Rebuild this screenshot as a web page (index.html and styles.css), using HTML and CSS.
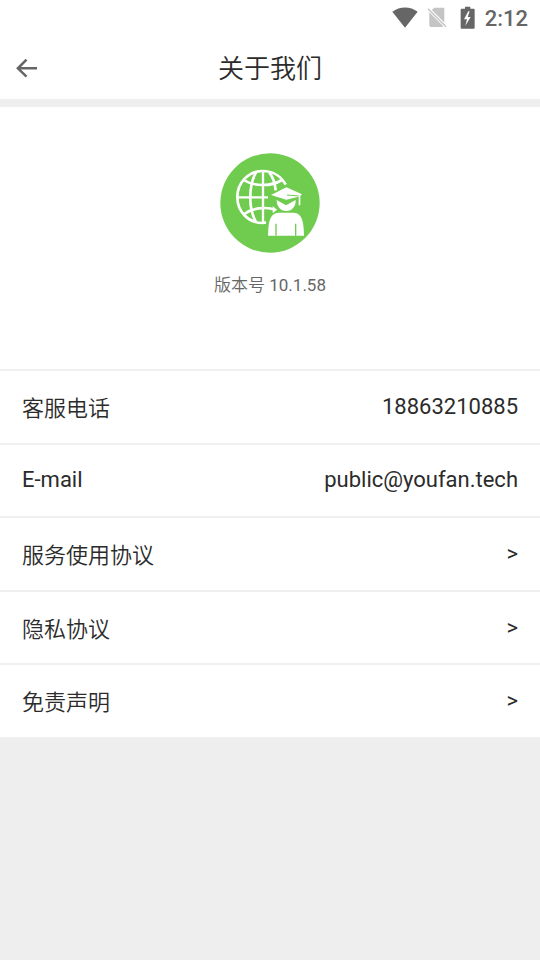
FILE: index.html
```
<!DOCTYPE html>
<html lang="zh-CN">
<head>
<meta charset="utf-8">
<meta name="viewport" content="width=device-width, initial-scale=1">
<title>关于我们</title>
<link rel="stylesheet" href="styles.css">
</head>
<body>
<div class="status">
  <svg class="wifi" viewBox="37 20 78 63" aria-hidden="true"><path d="M38 34C60 17 92 17 114 34L76 82Z"/></svg>
  <svg class="sim" viewBox="142 20 60 66" aria-hidden="true"><path d="M164 25H190Q194 25 194 29V70L156 32Z"/><path d="M149 38L191 80Q189 83 185 83H154Q149 83 149 78Z"/><path d="M145 28L199 82" fill="none" stroke="#fff" stroke-width="9"/><path d="M145 28L199 82" fill="none" stroke="#c4c4c4" stroke-width="4.5"/></svg>
  <svg class="battery" viewBox="241 16 45 69" aria-hidden="true"><path d="M256 18H272V24H282Q285 24 285 27V81Q285 84 282 84H246Q243 84 243 81V27Q243 24 246 24H256Z"/><path d="M266 32L253 56H262L257 75L273 49H264L270 32Z" fill="#fff"/></svg>
  <time>2:12</time>
</div>
<header class="header">
  <button class="back" type="button" aria-label="返回"><svg viewBox="47 54 69 60" aria-hidden="true"><path d="M113 85H54M80 58L53 85L80 111"/></svg></button>
  <h1>关于我们</h1>
</header>
<main>
  <section class="about">
    <svg class="logo" viewBox="30 22 300 300" aria-hidden="true">
      <circle cx="180" cy="172" r="149" fill="#70cc4e"/>
      <g fill="none" stroke="#fff" stroke-width="8">
        <path d="M227 117C213 91 187 76 158 76C115 76 82 111 82 154C82 198 115 232 158 232L168 230"/>
        <path d="M159 76V232M82 155H174" stroke-width="7"/>
        <path d="M138 80C115 120 115 190 138 229M178 80C190 96 195 112 197 134"/>
        <path d="M101 103C132 123 184 123 216 103M103 205C127 187 163 183 191 191"/>
      </g>
      <g fill="#fff">
        <path d="M188 181L201 192L188 203Z"/>
        <path d="M183 148L229 125L276 146L271 151V179H266V153L229 162Z"/>
        <path d="M200 163L228 179L257 163C258 182 246 196 229 196C211 196 200 182 200 163Z"/>
        <path d="M174 270C175 236 177 201 207 201H250C279 201 281 236 282 270Z"/>
      </g>
      <path d="M231 148L266 151" stroke="#70cc4e" stroke-width="3"/>
      <path d="M198 270V234M257 270V234" stroke="#70cc4e" stroke-width="4"/>
    </svg>
    <p class="version"><span class="cjk">版本号</span> 10.1.58</p>
  </section>
  <ul class="list">
    <li><span class="label cjk">客服电话</span><span>18863210885</span></li>
    <li><span>E-mail</span><span>public@youfan.tech</span></li>
    <li><a href="#service"><span class="label cjk">服务使用协议</span><span>&gt;</span></a></li>
    <li><a href="#privacy"><span class="label cjk">隐私协议</span><span>&gt;</span></a></li>
    <li><a href="#disclaimer"><span class="label cjk">免责声明</span><span>&gt;</span></a></li>
  </ul>
</main>
</body>
</html>
```
FILE: styles.css
```
* {
  box-sizing: border-box;
}

body {
  margin: 0;
  background: #eee;
  color: #2b2b2b;
  font-family: Roboto, "Noto Sans CJK SC", sans-serif;
}

.cjk {
  font-weight: 350;
}

.status {
  display: flex;
  align-items: center;
  justify-content: flex-end;
  height: 36px;
  padding: 0 12px;
  background: #fff;
  color: #666;
  fill: #666;
}

.wifi {
  width: 26px;
  height: 21px;
}

.sim {
  width: 20px;
  height: 22px;
  margin: 0 13px 0 9px;
  fill: #c4c4c4;
}

.battery {
  width: 15px;
  height: 23px;
  margin-right: 10px;
}

.status svg {
  margin-bottom: 2px;
}

.status time {
  padding-top: 2px;
  font-size: 22px;
  font-weight: 500;
  line-height: 34px;
}

.header {
  display: grid;
  grid-template-columns: 54px 1fr 54px;
  align-items: center;
  height: 63px;
  background: #fff;
}

.back {
  display: flex;
  padding: 0 16px;
  border: 0;
  background: none;
}

.back svg {
  width: 23px;
  height: 20px;
  fill: none;
  stroke: #666;
  stroke-width: 8;
}

h1 {
  margin: 0;
  padding-top: 2px;
  font-size: 26px;
  font-weight: 350;
  line-height: 40px;
  text-align: center;
}

.about {
  display: flex;
  flex-direction: column;
  align-items: center;
  margin-top: 8px;
  padding: 46px 0 71px;
  background: #fff;
}

.logo {
  width: 100px;
  height: 100px;
}

.version {
  margin: 20px 0 0;
  color: #666;
  font-size: 17px;
  line-height: 25px;
}

.list {
  display: grid;
  grid-auto-rows: 1fr;
  min-height: 368px;
  margin: 0;
  padding: 0;
  background: #fff;
  font-size: 22px;
  line-height: 32px;
  list-style: none;
}

.list li {
  display: flex;
  align-items: center;
  justify-content: space-between;
  padding: 0 22px;
  border-top: 2px solid #f0f0f0;
}

.list a {
  display: flex;
  flex: 1;
  align-items: center;
  justify-content: space-between;
  color: inherit;
  text-decoration: none;
}

.label {
  padding-top: 4px;
}
```
